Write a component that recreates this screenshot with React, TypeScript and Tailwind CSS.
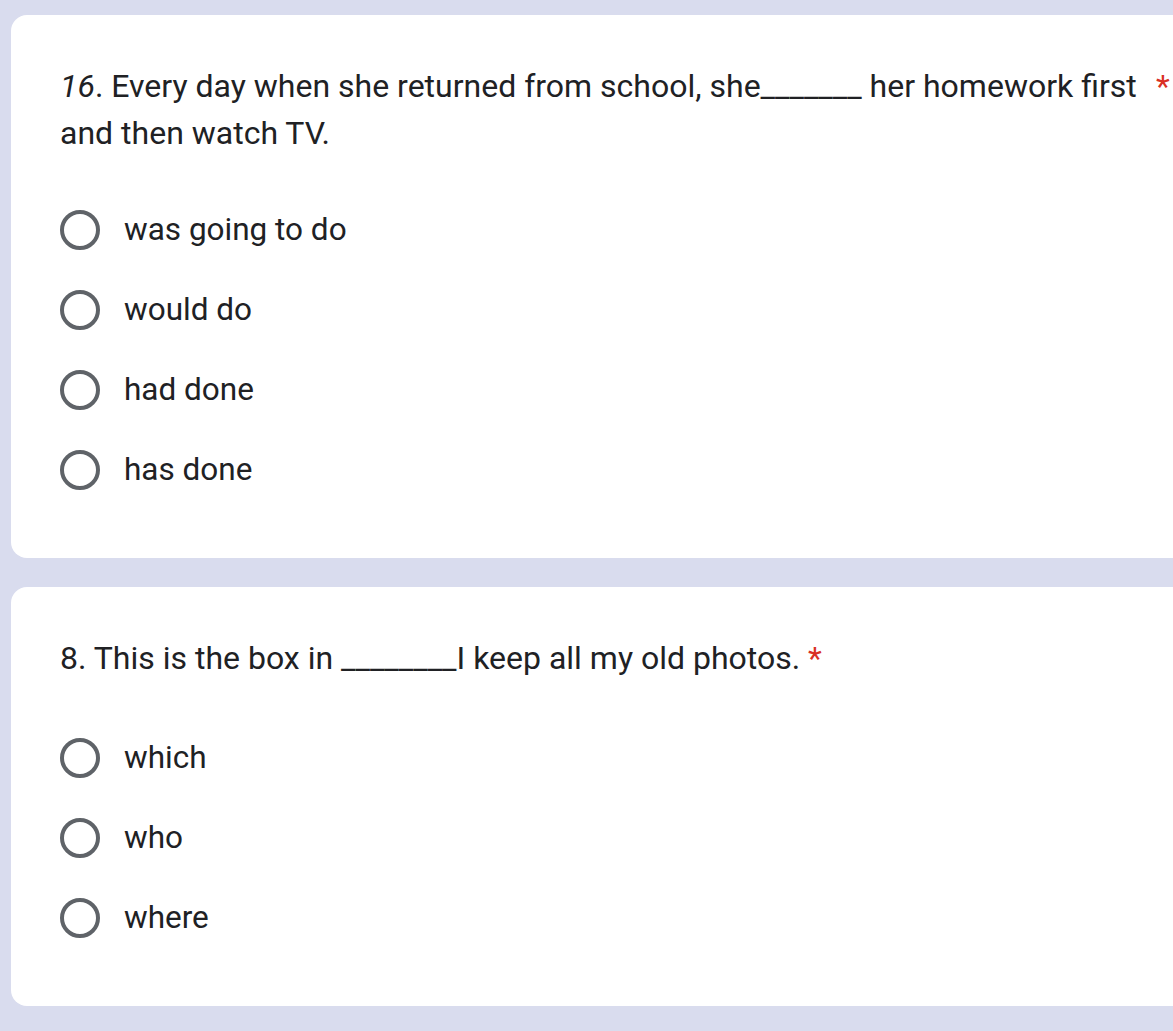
import React from "react";

const Radio = ({ label }: { label: string }) => (
  <div className="flex h-[80px] items-center">
    <div className="h-[40px] w-[40px] rounded-full border-[4px] border-[#5f6368]" />
    <span className="ml-[24px] text-[31.5px] leading-[40px] text-[#202124]">{label}</span>
  </div>
);

export default function App() {
  return (
    <div
      className="min-h-[1031px] w-[1173px] overflow-hidden bg-[#d9dcee] pt-[15px]"
      style={{ fontFamily: "Roboto, 'Noto Sans', sans-serif" }}
    >
      <div className="ml-[11px] w-[1200px] rounded-[16px] bg-white pb-[48px] pl-[49px] pt-[48px]">
        <div className="flex w-[1112px] text-[32px] leading-[47px] text-[#202124]">
          <div className="flex-1">
            <span className="italic">16</span>. Every day when she returned from school, she_______ her homework first and then watch TV.
          </div>
          <span className="w-[30px] pl-[14px] text-[#d93025]">*</span>
        </div>
        <div className="mt-[33px]">
          <Radio label="was going to do" />
          <Radio label="would do" />
          <Radio label="had done" />
          <Radio label="has done" />
        </div>
      </div>
      <div className="ml-[11px] mt-[29px] w-[1200px] rounded-[16px] bg-white pb-[48px] pl-[49px] pt-[48px]">
        <div className="text-[32px] leading-[47px] text-[#202124]">
          8. This is the box in ________I keep all my old photos. <span className="text-[#d93025]">*</span>
        </div>
        <div className="mt-[36px]">
          <Radio label="which" />
          <Radio label="who" />
          <Radio label="where" />
        </div>
      </div>
    </div>
  );
}
